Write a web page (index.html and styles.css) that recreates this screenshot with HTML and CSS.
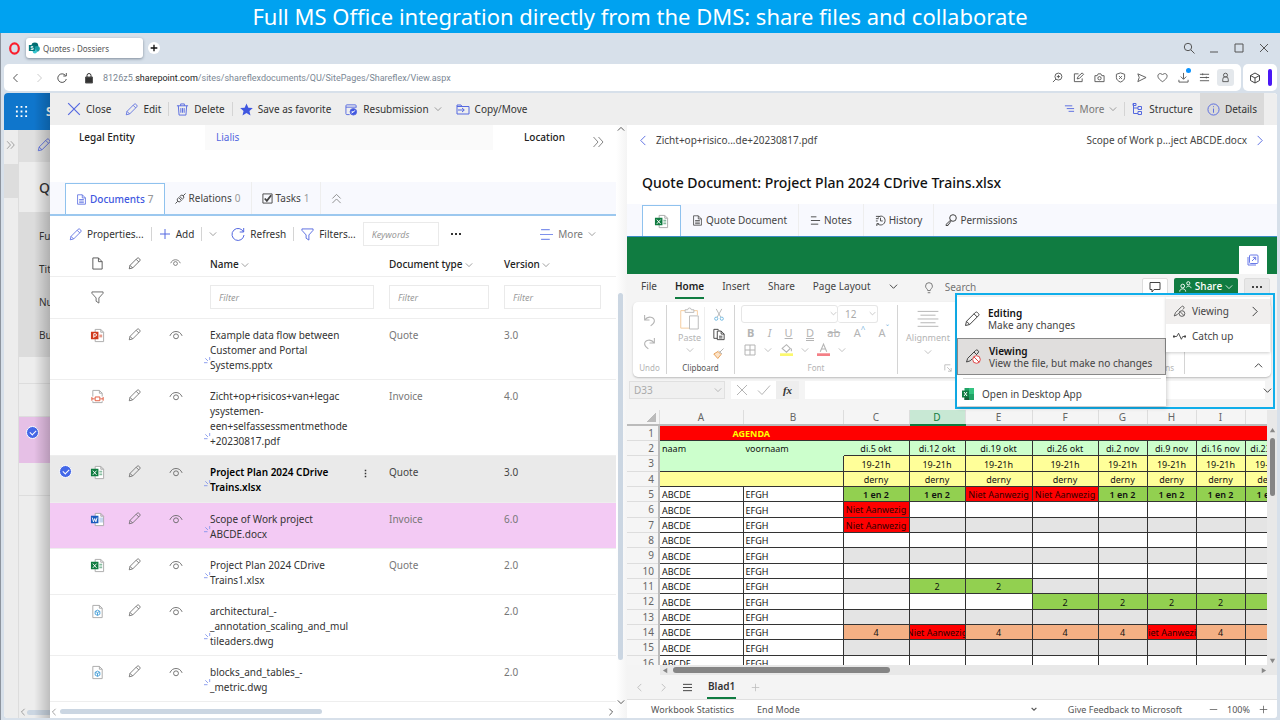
FILE: index.html
```html
<!DOCTYPE html>
<html lang="en">
<head>
<meta charset="utf-8">
<title>Quotes › Dossiers</title>
<link rel="stylesheet" href="styles.css">
</head>
<body>
<svg class="defs" aria-hidden="true">
  <symbol id="pencil" viewBox="0 0 16 16"><path d="M1.500 14.500l1-4.200L11.300 1.500a1.500 1.500 0 0 1 2.100 0l1.100 1.100a1.500 1.500 0 0 1 0 2.100L5.700 13.500zM2.500 10.300l3.200 3.200M10 2.800l3.200 3.200"/></symbol>
  <symbol id="chev" viewBox="0 0 10 10"><path d="M1 3l4 4 4-4"/></symbol>
  <symbol id="eye" viewBox="0 0 16 12"><path d="M1 7C2.500 3.500 5 2 8 2s5.500 1.500 7 5"/><circle cx="8" cy="7.500" r="2.800"/></symbol>
  <symbol id="funnel" viewBox="0 0 14 14"><path d="M1 1h12v1.500L8.500 7.500v5.500L5.500 11V7.500L1 2.500z"/></symbol>
  <symbol id="page" viewBox="0 0 12 14"><path d="M1 1h6l4 4v8H1zM7 1v4h4"/></symbol>
  <symbol id="doc" viewBox="0 0 12 14"><path d="M1 1h6l4 4v8H1zM7 1v4h4M3 7h6M3 9h6M3 11h6"/></symbol>
  <symbol id="xls" viewBox="0 0 16 16"><path class="paper" d="M5.500 1.500h6l3 3v10h-9zM11.500 1.500v3h3"/><path class="tint" d="M10 6h3v2h-3zM10 9h3v2h-3z"/><path class="app" d="M1 4h8v8H1z"/><path class="mark" d="M3 6l4 4.500M7 6l-4 4.500"/></symbol>
  <symbol id="ppt" viewBox="0 0 16 16"><path class="paper" d="M5.500 1.500h6l3 3v10h-9zM11.500 1.500v3h3"/><path class="tint" d="M10 7h3v3h-3z"/><path class="app" d="M1 4h8v8H1z"/><path class="mark" d="M4 10.500V6h1.500a1.300 1.300 0 0 1 0 2.800H4"/></symbol>
  <symbol id="word" viewBox="0 0 16 16"><path class="paper" d="M5.500 1.500h6l3 3v10h-9zM11.500 1.500v3h3"/><path class="tint" d="M10 6h4v1h-4zM10 8h4v1h-4zM10 10h4v1h-4z"/><path class="app" d="M1 4h8v8H1z"/><path class="mark" d="M2.500 6l1.200 4.500L5 7l1.300 3.500L7.500 6"/></symbol>
  <symbol id="pdf" viewBox="0 0 16 16"><path class="paper" d="M3 8V1.500h7l3 3V8M10 1.500v3h3M3 13v1.500h10V13"/><path class="redline" d="M2 8.500v4M14 8.500v4M2 10.500h3M11 10.500h3M5.500 8.500h5v4h-5z"/></symbol>
  <symbol id="dwg" viewBox="0 0 16 16"><path class="paper" d="M3 1.500h7l3 3v10H3zM10 1.500v3h3"/><path class="blueline" d="M8 6.500l2.500 1.300v3L8 12.200l-2.500-1.400v-3zM5.500 7.800L8 9l2.500-1.200M8 9v3"/></symbol>
  <symbol id="spark" viewBox="0 0 8 8"><path d="M0 6.500h4M1.500 1.500l3 3M6.500 0v3.500"/></symbol>
  <symbol id="close" viewBox="0 0 12 12"><path d="M1 1l10 10M11 1L1 11"/></symbol>
  <symbol id="plus" viewBox="0 0 12 12"><path d="M6 1v10M1 6h10"/></symbol>
  <symbol id="dbl" viewBox="0 0 12 12"><path d="M1.500 1L6 6l-4.500 5M6.500 1L11 6l-4.500 5"/></symbol>
</svg>

<header class="banner"><h1>Full MS Office integration directly from the DMS: share files and collaborate</h1></header>

<div class="window">
  <div class="tabstrip">
    <svg class="opera" viewBox="0 0 12 12"><ellipse cx="6" cy="6" rx="4" ry="4.700"/></svg>
    <button class="browser-tab" type="button">
      <svg class="i12" viewBox="0 0 14 14"><circle cx="8" cy="4.500" r="4" fill="#036c70" stroke="none"/><circle cx="10.500" cy="8" r="3.300" fill="#1a9ba1" stroke="none"/><circle cx="8" cy="11" r="2.500" fill="#37c6d0" stroke="none"/><path d="M1 3.500h7v7H1z" fill="#03787c" stroke="none"/><path d="M6 5.200H3.700v1.700H6v1.800H3.200" fill="none" stroke="#fff"/></svg>
      Quotes › Dossiers</button>
    <button class="newtab" type="button" aria-label="New tab"><svg class="i8" viewBox="0 0 12 12"><use href="#plus"/></svg></button>
    <span class="grow"></span>
    <div class="wincontrols">
      <svg viewBox="0 0 12 12"><circle cx="5" cy="5" r="3.700"/><path d="M8 8l3.500 3.500"/></svg>
      <svg viewBox="0 0 12 12"><path d="M2 10h8"/></svg>
      <svg viewBox="0 0 12 12"><path d="M2 2h8v8H2z"/></svg>
      <svg viewBox="0 0 12 12"><path d="M2 2l8 8M10 2l-8 8"/></svg>
    </div>
  </div>

  <div class="addressrow">
    <div class="address">
      <svg class="i12" viewBox="0 0 12 12"><path d="M7.500 2l-4 4 4 4"/></svg>
      <svg class="i12 faint" viewBox="0 0 12 12"><path d="M4.500 2l4 4-4 4"/></svg>
      <svg class="i12 reload" viewBox="0 0 12 12"><path d="M9.500 3.500A4.300 4.300 0 1 0 10.300 7M10.300 1v3H7.300"/></svg>
      <svg class="i12" viewBox="0 0 12 12"><path d="M2.500 5h7v6h-7z" fill="#333"/><path d="M4 5V3.500a2 2 0 0 1 4 0V5" stroke="#333"/></svg>
      <span class="url">8126z5.<b>sharepoint.com</b>/sites/shareflexdocuments/QU/SitePages/Shareflex/View.aspx</span>
      <div class="addricons">
        <svg viewBox="0 0 12 12"><circle cx="7" cy="5" r="3.800"/><path d="M4.300 7.700L1 11M5.200 5h3.600M7 3.200v3.600"/></svg>
        <svg viewBox="0 0 12 12"><path d="M6 2H1.500v8.500H10V7M4.500 7.500l1-2.500L10 1l1.500 1.500L7 7z"/></svg>
        <svg viewBox="0 0 12 12"><path d="M1 4h2.500L4.500 2h3l1 2H11v6.500H1z"/><circle cx="6" cy="6.800" r="1.800"/></svg>
        <svg viewBox="0 0 12 12"><path d="M6 1l4.500 1.500V6c0 2.500-2 4-4.500 5C3.500 10 1.500 8.500 1.500 6V2.500zM4.500 4.500l3 3M7.500 4.500l-3 3"/></svg>
        <svg viewBox="0 0 12 12"><path d="M2 2l9 4-9 4.500L3.500 6z"/></svg>
        <svg viewBox="0 0 12 12"><path d="M6 10.500C2 8 1 6 1 4.300 1 1.500 4.500.8 6 3.200 7.500.8 11 1.500 11 4.300 11 6 10 8 6 10.500z"/></svg>
        <span class="dl"><svg viewBox="0 0 12 12"><path d="M6 1v6.500M3 5l3 3 3-3M1 8.500V11h10V8.500"/></svg></span>
        <svg viewBox="0 0 12 12"><path d="M1 2.500h10M1 6h10M1 9.500h10M4 1.500v2M8 5v2"/></svg>
        <span class="avatar"><svg viewBox="0 0 12 12"><circle cx="6" cy="3.500" r="2.200"/><path d="M3 10.500V8a3 3 0 0 1 6 0v2.500z"/></svg></span>
      </div>
    </div>
    <div class="sidebox">
      <svg class="i12" viewBox="0 0 12 12"><path d="M6 1l4.500 2.500v5L6 11 1.500 8.500v-5zM1.500 3.500L6 6l4.500-2.500M6 6v5"/></svg>
      <span class="purple"></span>
    </div>
  </div>

  <div class="page">
    <aside class="under">
      <div class="suite">
        <svg class="waffle" viewBox="0 0 14 14"><path d="M1 1h2v2H1zM6 1h2v2H6zM11 1h2v2h-2zM1 6h2v2H1zM6 6h2v2H6zM11 6h2v2h-2zM1 11h2v2H1zM6 11h2v2H6zM11 11h2v2h-2z"/></svg>
        <b>S</b>
      </div>
      <div class="under-body">
        <div class="rail"><div class="rail-top"><svg viewBox="0 0 12 12"><use href="#dbl"/></svg></div><div class="rail-sel"></div></div>
        <div class="under-main">
          <div class="u-tool"><svg viewBox="0 0 16 16"><use href="#pencil"/></svg></div>
          <div class="u-title">Q</div>
          <div class="u-form"><span>Fu</span><span>Tit</span><span>Nu</span><span>Bu</span></div>
          <div class="u-gap"></div>
          <div class="u-row"></div>
          <div class="u-pink"><input class="round" type="checkbox" checked aria-label="Dossier selected"></div>
          <div class="u-row"></div>
          <div class="u-rest"><svg class="i8" viewBox="0 0 10 10"><path d="M7 1L3 5l4 4"/></svg><span class="hthumb grow"></span></div>
        </div>
      </div>
    </aside>

    <main class="panel">
      <div class="cmdbar">
        <button type="button"><svg class="i14 blue" viewBox="0 0 12 12"><use href="#close"/></svg>Close</button>
        <button type="button"><svg class="i13 blue" viewBox="0 0 16 16"><use href="#pencil"/></svg>Edit</button>
        <i class="sep"></i>
        <button type="button"><svg class="i13 blue" viewBox="0 0 14 14"><path d="M1 3h12M5 3V1h4v2M2.500 3l.8 10h7.400l.8-10M5.200 5.500v5M7 5.500v5M8.800 5.500v5"/></svg>Delete</button>
        <i class="sep"></i>
        <button type="button"><svg class="i13" viewBox="0 0 14 14"><path d="M7 .5l2 4.500 4.800.4-3.600 3.200 1.100 4.900L7 10.900l-4.300 2.600 1.100-4.900L.2 5.400 5 5z" fill="#4057e0" stroke="none"/></svg>Save as favorite</button>
        <button type="button"><svg class="i13 blue" viewBox="0 0 14 14"><path d="M5 12.500H2a1 1 0 0 1-1-1V3a1 1 0 0 1 1-1h9a1 1 0 0 1 1 1v2M1 4.500h11"/><circle cx="9" cy="9.500" r="3.500" fill="#4057e0"/><path d="M7 11l4-3M7 9.500h2" stroke="#fff"/></svg>Resubmission<svg class="i8 gray" viewBox="0 0 10 10"><use href="#chev"/></svg></button>
        <button type="button"><svg class="i14 blue" viewBox="0 0 14 12"><path d="M1 2h4l1 1.500h7V11H1zM1 3.500h5M2 7h6M6 5l2.300 2L6 9"/></svg>Copy/Move</button>
        <span class="grow"></span>
        <button type="button" class="soft"><svg class="i11 blue" viewBox="0 0 12 12"><path d="M1 2h8M3 5h8M5 8h6"/></svg>More<svg class="i8 gray" viewBox="0 0 10 10"><use href="#chev"/></svg></button>
        <i class="sep"></i>
        <button type="button"><svg class="i12 blue" viewBox="0 0 12 12"><path d="M1.500 0v10.500H6M1.500 5H6M1 .5h3v2H1zM6 3.500h3.500v3H6zM6 8.500h3.500v3H6z"/></svg>Structure</button>
        <button type="button" class="active"><svg class="i13 blue" viewBox="0 0 14 14"><circle cx="7" cy="7" r="6"/><path d="M7 6v4.500M7 3.500v1"/></svg>Details</button>
      </div>

      <div class="split">
        <section class="left">
          <div class="scrollarea">
            <div class="entity">
              <strong class="lbl">Legal Entity</strong><a class="val" href="#">Lialis</a><strong class="loc">Location</strong>
              <svg class="i12 gray dbl" viewBox="0 0 12 12"><use href="#dbl"/></svg>
            </div>
            <nav class="tabs">
              <button type="button" class="tab on"><svg class="i11 blue" viewBox="0 0 12 14"><use href="#doc"/></svg>Documents <small>7</small></button>
              <button type="button" class="tab line"><svg class="i11" viewBox="0 0 12 12"><path d="M.5 11.500l2.500-2.500M11.500.5L9 3M3 9a2.300 2.300 0 0 1 0-3l1-1 3 3-1 1a2.100 2.100 0 0 1-3 0zM9 3a2.100 2.100 0 0 0-3 0l-.8.8 3 3 .8-.8A2.300 2.300 0 0 0 9 3z"/></svg>Relations <small>0</small></button>
              <button type="button" class="tab line"><svg class="i11" viewBox="0 0 12 12"><path d="M1 1h10v10H1z"/><path d="M3 6l2.300 2.500L10 2.500" class="thick"/></svg>Tasks <small>1</small></button>
              <button type="button" class="tab" aria-label="Collapse"><svg class="i11 gray" viewBox="0 0 12 12"><path d="M1.500 6L6 1.500 10.500 6M1.500 11L6 6.500l4.500 4.500"/></svg></button>
            </nav>
            <div class="tools">
              <button type="button"><svg class="i13 blue" viewBox="0 0 16 16"><use href="#pencil"/></svg>Properties...</button>
              <i class="sep"></i>
              <button type="button"><svg class="i12 blue" viewBox="0 0 12 12"><use href="#plus"/></svg>Add</button>
              <i class="sep"></i>
              <button type="button" aria-label="Add options"><svg class="i8 gray" viewBox="0 0 10 10"><use href="#chev"/></svg></button>
              <button type="button"><svg class="i14 blue" viewBox="0 0 14 14"><path d="M12.500 5A6 6 0 1 0 13 8M12.700 1v4H8.700"/></svg>Refresh</button>
              <i class="sep"></i>
              <button type="button"><svg class="i13 blue" viewBox="0 0 14 14"><use href="#funnel"/></svg>Filters...</button>
              <input class="field kw" type="text" placeholder="Keywords" aria-label="Keywords">
              <button type="button" class="dots" aria-label="More actions"><svg viewBox="0 0 12 4"><path d="M1 1h2v2H1zM5 1h2v2H5zM9 1h2v2H9z"/></svg></button>
              <span class="grow"></span>
              <button type="button" class="soft"><svg class="i13 lblue" viewBox="0 0 12 12"><path d="M1 1.500h8M0 6h12M1 10.500h8"/></svg>More<svg class="i8 gray" viewBox="0 0 10 10"><use href="#chev"/></svg></button>
            </div>
            <table class="docs">
              <colgroup><col class="c-check"><col class="c-file"><col class="c-icon"><col class="c-icon"><col class="c-name"><col class="c-type"><col></colgroup>
              <thead>
                <tr><th></th><th><svg class="i13" viewBox="0 0 12 14"><use href="#page"/></svg></th><th><svg class="i13" viewBox="0 0 16 16"><use href="#pencil"/></svg></th><th><svg class="i11" viewBox="0 0 16 12"><use href="#eye"/></svg></th>
                <th class="t name">Name <svg class="i8 gray" viewBox="0 0 10 10"><use href="#chev"/></svg></th><th class="t">Document type <svg class="i8 gray" viewBox="0 0 10 10"><use href="#chev"/></svg></th><th class="t">Version <svg class="i8 gray" viewBox="0 0 10 10"><use href="#chev"/></svg></th></tr>
              </thead>
              <tbody>
                <tr class="filters"><td></td><td><svg class="i13" viewBox="0 0 14 14"><use href="#funnel"/></svg></td><td></td><td></td>
                <td class="name"><input class="field" type="text" placeholder="Filter" aria-label="Filter name"></td><td><input class="field" type="text" placeholder="Filter" aria-label="Filter document type"></td><td><input class="field" type="text" placeholder="Filter" aria-label="Filter version"></td></tr>
                <tr><td></td><td><svg class="file red" viewBox="0 0 16 16"><use href="#ppt"/></svg></td><td><svg class="i13" viewBox="0 0 16 16"><use href="#pencil"/></svg></td><td><svg class="i14" viewBox="0 0 16 12"><use href="#eye"/></svg></td>
                <td class="name">Example data flow between<br>Customer and Portal<br>Systems.pptx<svg class="spark" viewBox="0 0 8 8"><use href="#spark"/></svg></td><td>Quote</td><td>3.0</td></tr>
                <tr><td></td><td><svg class="file" viewBox="0 0 16 16"><use href="#pdf"/></svg></td><td><svg class="i13" viewBox="0 0 16 16"><use href="#pencil"/></svg></td><td><svg class="i14" viewBox="0 0 16 12"><use href="#eye"/></svg></td>
                <td class="name">Zicht+op+risicos+van+legac<br>ysystemen-<br>een+selfassessmentmethode<br>+20230817.pdf<svg class="spark" viewBox="0 0 8 8"><use href="#spark"/></svg></td><td>Invoice</td><td>4.0</td></tr>
                <tr class="sel"><td><input class="round" type="checkbox" checked aria-label="Select document"></td><td><svg class="file green" viewBox="0 0 16 16"><use href="#xls"/></svg></td><td><svg class="i13" viewBox="0 0 16 16"><use href="#pencil"/></svg></td><td><svg class="i14" viewBox="0 0 16 12"><use href="#eye"/></svg></td>
                <td class="name">Project Plan 2024 CDrive<br>Trains.xlsx<svg class="spark" viewBox="0 0 8 8"><use href="#spark"/></svg><button type="button" class="kebab" aria-label="Document menu"><svg viewBox="0 0 4 12"><path d="M1 1h2v2H1zM1 5h2v2H1zM1 9h2v2H1z"/></svg></button></td><td>Quote</td><td>3.0</td></tr>
                <tr class="pink"><td></td><td><svg class="file navy" viewBox="0 0 16 16"><use href="#word"/></svg></td><td><svg class="i13" viewBox="0 0 16 16"><use href="#pencil"/></svg></td><td><svg class="i14" viewBox="0 0 16 12"><use href="#eye"/></svg></td>
                <td class="name">Scope of Work project<br>ABCDE.docx<svg class="spark" viewBox="0 0 8 8"><use href="#spark"/></svg></td><td>Invoice</td><td>6.0</td></tr>
                <tr><td></td><td><svg class="file green" viewBox="0 0 16 16"><use href="#xls"/></svg></td><td><svg class="i13" viewBox="0 0 16 16"><use href="#pencil"/></svg></td><td><svg class="i14" viewBox="0 0 16 12"><use href="#eye"/></svg></td>
                <td class="name">Project Plan 2024 CDrive<br>Trains1.xlsx<svg class="spark" viewBox="0 0 8 8"><use href="#spark"/></svg></td><td>Quote</td><td>2.0</td></tr>
                <tr><td></td><td><svg class="file" viewBox="0 0 16 16"><use href="#dwg"/></svg></td><td><svg class="i13" viewBox="0 0 16 16"><use href="#pencil"/></svg></td><td><svg class="i14" viewBox="0 0 16 12"><use href="#eye"/></svg></td>
                <td class="name">architectural_-<br>_annotation_scaling_and_mul<br>tileaders.dwg<svg class="spark" viewBox="0 0 8 8"><use href="#spark"/></svg></td><td></td><td>2.0</td></tr>
                <tr><td></td><td><svg class="file" viewBox="0 0 16 16"><use href="#dwg"/></svg></td><td><svg class="i13" viewBox="0 0 16 16"><use href="#pencil"/></svg></td><td><svg class="i14" viewBox="0 0 16 12"><use href="#eye"/></svg></td>
                <td class="name">blocks_and_tables_-<br>_metric.dwg<svg class="spark" viewBox="0 0 8 8"><use href="#spark"/></svg></td><td></td><td>2.0</td></tr>
              </tbody>
            </table>
            <div class="hscroll"><svg class="i8 gray" viewBox="0 0 10 10"><path d="M7 1L3 5l4 4"/></svg><span class="hthumb half"></span><span class="grow"></span><svg class="i8 dark" viewBox="0 0 10 10"><path d="M3 1l4 4-4 4"/></svg></div>
          </div>
          <div class="vscroll"><svg class="i8 dark" viewBox="0 0 10 10"><path d="M1 7l4-4 4 4"/></svg><span class="vthumb"></span><svg class="i8 dark" viewBox="0 0 10 10"><use href="#chev"/></svg></div>
        </section>

        <section class="right">
          <div class="pager">
            <a href="#"><svg class="i11 blue" viewBox="0 0 10 12"><path d="M7 1L2 6l5 5"/></svg>Zicht+op+risico...de+20230817.pdf</a>
            <a href="#">Scope of Work p...ject ABCDE.docx<svg class="i11 blue" viewBox="0 0 10 12"><path d="M3 1l5 5-5 5"/></svg></a>
          </div>
          <h2>Quote Document: Project Plan 2024 CDrive Trains.xlsx</h2>
          <nav class="tabs rtabs">
            <button type="button" class="tab on" aria-label="Workbook"><svg class="file green" viewBox="0 0 16 16"><use href="#xls"/></svg></button>
            <button type="button" class="tab line"><svg class="i11" viewBox="0 0 12 14"><use href="#doc"/></svg>Quote Document</button>
            <button type="button" class="tab line"><svg class="i11" viewBox="0 0 12 12"><path d="M1 2h6M1 6h10M1 10h8"/></svg>Notes</button>
            <button type="button" class="tab line"><svg class="i11" viewBox="0 0 12 12"><path d="M1 1.500h4M1 4h3M1 6.500h2M6 3v3.500h2.500M3 3C6-.5 11 1.500 11 6s-5 6.500-8.500 3.500M2 12V9.500h2.500"/></svg>History</button>
            <button type="button" class="tab"><svg class="i12" viewBox="0 0 12 12"><circle cx="8" cy="4" r="3.300"/><path d="M5.500 6.200L1 10.500V11.500h2l.5-1.500 1-.3.500-1.500 1.500-1.300"/></svg>Permissions</button>
          </nav>
          <div class="office">
            <div class="greenbar"><button type="button" class="popout" aria-label="Open in new window"><svg class="i12" viewBox="0 0 12 12"><rect x="2.500" y="1" width="8.500" height="8.500" rx="1"/><path d="M1 3v8h8M5 7l3.500-3.500M5.800 3.300h2.900v2.900"/></svg></button></div>
            <div class="menubar">
              <button type="button">File</button><button type="button" class="cur">Home</button><button type="button">Insert</button><button type="button">Share</button><button type="button">Page Layout</button>
              <svg class="i9 dark" viewBox="0 0 10 10"><use href="#chev"/></svg>
              <label class="search"><svg class="i12" viewBox="0 0 12 14"><path d="M4.500 10C4.500 8 2 7.500 2 4.800a4 4 0 0 1 8 0C10 7.500 7.500 8 7.500 10zM4.500 12.500h3"/></svg><input type="text" placeholder="Search"></label>
              <button type="button" class="comment" aria-label="Comments"><svg class="i12" viewBox="0 0 12 12"><path d="M1 1.500h10v7H5L3 11V8.500H1z"/></svg></button>
              <button type="button" class="share"><svg class="i13" viewBox="0 0 14 12"><circle cx="4" cy="5.500" r="2"/><path d="M.8 11.500c0-4 6.400-4 6.400 0"/><circle cx="10" cy="2.500" r="1.700"/><path d="M8 7c.8-2 4.500-2 5 .8"/></svg>Share<svg class="i8" viewBox="0 0 10 10"><use href="#chev"/></svg></button>
              <button type="button" class="ell dots" aria-label="More options"><svg viewBox="0 0 12 4"><path d="M1 1h2v2H1zM5 1h2v2H5zM9 1h2v2H9z"/></svg></button>
            </div>
            <div class="ribbon">
              <div class="grp undo"><svg class="i13" viewBox="0 0 12 12"><path d="M1.500 1v4.500H6M1.500 5.500C5 1 10.500 3 10.500 6.500c0 2-1.500 3-3.500 4.500"/></svg><svg class="i13" viewBox="0 0 12 12"><path d="M10.500 1v4.500H6M10.500 5.500C7 1 1.500 3 1.500 6.500c0 2 1.500 3 3.500 4.500"/></svg><small>Undo</small></div>
              <div class="grp clip">
                <div class="paste"><svg viewBox="0 0 24 26"><path d="M7 4H2v20h10M16 4h5v5" stroke="#f3c795"/><path d="M7 5V3h3a2 2 0 0 1 4 0h3v3H7zM12 10h10v15H12z" fill="#fff"/></svg><span>Paste</span><svg class="i8" viewBox="0 0 10 10"><use href="#chev"/></svg></div>
                <div class="clipicons">
                  <svg viewBox="0 0 12 14"><path d="M3 1l5 9M9 1L4 10"/><g stroke="#6fb8e0"><circle cx="3" cy="11.500" r="1.700"/><circle cx="9" cy="11.500" r="1.700"/></g></svg>
                  <svg viewBox="0 0 14 14" class="dark"><path d="M5 11.500H1V1h5l1 1.500M5 3h4.500L13 6.500V13H5zM9.500 3v3.500H13M7 9h4M7 11h4"/></svg>
                  <svg viewBox="0 0 12 12"><path d="M7 4.500l3.500-3.500M5.500 3.500l3.500 3"/><path d="M5 4L.8 6.500l4 4.500L8 7z" stroke="#e8a15c" fill="#fbe3c8"/></svg>
                </div>
                <small class="strong">Clipboard</small>
              </div>
              <div class="grp font">
                <div class="selects"><div class="pick"><select aria-label="Font"><option></option></select><svg class="i8" viewBox="0 0 10 10"><use href="#chev"/></svg></div><div class="pick size"><select aria-label="Font size"><option>12</option></select><svg class="i8" viewBox="0 0 10 10"><use href="#chev"/></svg></div></div>
                <div class="fmt"><b>B</b><i>I</i><u>U</u><u class="dbl-u">D</u><s>ab</s><span>A<sup>^</sup></span><span>A<sup>ˇ</sup></span></div>
                <div class="fmt fills">
                  <svg class="i12" viewBox="0 0 12 12"><path d="M1 1h10v10H1zM6 1v10M1 6h10"/></svg><svg class="i8" viewBox="0 0 10 10"><use href="#chev"/></svg>
                  <svg class="i13" viewBox="0 0 12 12"><path d="M2 5l4-3.500L9.500 5 6 8.500zM10.500 5v2.500"/><path d="M0 9.500h12v2.500H0z" fill="#fbf86e" stroke="none"/></svg><svg class="i8" viewBox="0 0 10 10"><use href="#chev"/></svg>
                  <svg class="i13" viewBox="0 0 12 12"><path d="M3 8l3-7 3 7M4 5.500h4"/><path d="M0 9.500h12v2.500H0z" fill="#f47f86" stroke="none"/></svg><svg class="i8" viewBox="0 0 10 10"><use href="#chev"/></svg>
                </div>
                <small>Font</small>
              </div>
              <div class="grp align"><svg viewBox="0 0 22 18"><path d="M0 1.500h22M3 5.500h16M0 9.500h22M3 13.500h16M0 17.300h22"/></svg><span>Alignment</span><svg class="i8" viewBox="0 0 10 10"><use href="#chev"/></svg><small class="launch"><svg class="i8" viewBox="0 0 10 10"><path d="M8 1H1v7M4 4l5 5M9 5v4H5"/></svg></small></div>
              <div class="grp grow options"><small>ns</small></div>
              <div class="grp collapse"><svg class="i9 dark" viewBox="0 0 10 10"><path d="M1 7l4-4 4 4"/></svg></div>
            </div>
            <div class="formula">
              <div class="namebox"><input type="text" value="D33" aria-label="Name box"><svg class="i8" viewBox="0 0 10 10"><use href="#chev"/></svg></div>
              <div class="fxbtns"><svg class="i12" viewBox="0 0 12 12"><use href="#close"/></svg><svg class="i12" viewBox="0 0 12 12"><path d="M0 6.500l4 4L12 1.500"/></svg><em>fx</em></div>
              <input class="fx" type="text" aria-label="Formula"><svg class="i9 dark" viewBox="0 0 10 10"><use href="#chev"/></svg>
            </div>
            <div class="sheetwrap">
              <div class="sheet">
                <table class="cells">
                  <colgroup><col class="w-h"><col class="w-a"><col class="w-b"><col class="w-c"><col class="w-d"><col class="w-e"><col class="w-c"><col class="w-g"><col class="w-g"><col class="w-g"><col class="w-g"></colgroup>
                  <thead><tr><th class="corner"></th><th>A</th><th>B</th><th>C</th><th class="hot">D</th><th>E</th><th>F</th><th>G</th><th>H</th><th>I</th><th></th></tr></thead>
                  <tbody>
                    <tr class="r1"><th>1</th><td colspan="2">AGENDA</td><td colspan="8"></td></tr>
                    <tr class="mint"><th>2</th><td class="l open">naam</td><td class="l open">voornaam</td><td>di.5 okt</td><td>di.12 okt</td><td>di.19 okt</td><td>di.26 okt</td><td>di.2 nov</td><td>di.9 nov</td><td>di.16 nov</td><td>di.23 nov</td></tr>
                    <tr class="yellow"><th>3</th><td class="mintc" colspan="2"></td><td>19-21h</td><td>19-21h</td><td>19-21h</td><td>19-21h</td><td>19-21h</td><td>19-21h</td><td>19-21h</td><td>19-21h</td></tr>
                    <tr class="yellow"><th>4</th><td colspan="2"></td><td>derny</td><td>derny</td><td>derny</td><td>derny</td><td>derny</td><td>derny</td><td>derny</td><td>derny</td></tr>
                    <tr class="data bold"><th>5</th><td class="l">ABCDE</td><td class="l">EFGH</td><td class="g">1 en 2</td><td class="g">1 en 2</td><td class="r">Niet Aanwezig</td><td class="r">Niet Aanwezig</td><td class="g">1 en 2</td><td class="g">1 en 2</td><td class="g">1 en 2</td><td class="g">1 en 2</td></tr>
                    <tr class="data"><th>6</th><td class="l">ABCDE</td><td class="l">EFGH</td><td class="r">Niet Aanwezig</td><td></td><td></td><td></td><td></td><td></td><td></td><td></td></tr>
                    <tr class="data alt"><th>7</th><td class="l">ABCDE</td><td class="l">EFGH</td><td class="r">Niet Aanwezig</td><td></td><td></td><td></td><td></td><td></td><td></td><td></td></tr>
                    <tr class="data"><th>8</th><td class="l">ABCDE</td><td class="l">EFGH</td><td></td><td></td><td></td><td></td><td></td><td></td><td></td><td></td></tr>
                    <tr class="data alt"><th>9</th><td class="l">ABCDE</td><td class="l">EFGH</td><td></td><td></td><td></td><td></td><td></td><td></td><td></td><td></td></tr>
                    <tr class="data"><th>10</th><td class="l">ABCDE</td><td class="l">EFGH</td><td></td><td></td><td></td><td></td><td></td><td></td><td></td><td></td></tr>
                    <tr class="data alt"><th>11</th><td class="l">ABCDE</td><td class="l">EFGH</td><td></td><td class="g">2</td><td class="g">2</td><td></td><td></td><td></td><td></td><td></td></tr>
                    <tr class="data"><th>12</th><td class="l">ABCDE</td><td class="l">EFGH</td><td></td><td></td><td></td><td class="g">2</td><td class="g">2</td><td class="g">2</td><td class="g">2</td><td class="g"></td></tr>
                    <tr class="data alt"><th>13</th><td class="l">ABCDE</td><td class="l">EFGH</td><td></td><td></td><td></td><td></td><td></td><td></td><td></td><td></td></tr>
                    <tr class="data"><th>14</th><td class="l">ABCDE</td><td class="l">EFGH</td><td class="o">4</td><td class="r"><span>Niet Aanwezig</span></td><td class="o">4</td><td class="o">4</td><td class="o">4</td><td class="r"><span>Niet Aanwezig</span></td><td class="o">4</td><td class="o"></td></tr>
                    <tr class="data alt"><th>15</th><td class="l">ABCDE</td><td class="l">EFGH</td><td></td><td></td><td></td><td></td><td></td><td></td><td></td><td></td></tr>
                    <tr class="data"><th>16</th><td class="l">ABCDE</td><td class="l">EFGH</td><td></td><td></td><td></td><td></td><td></td><td></td><td></td><td></td></tr>
                  </tbody>
                </table>
              </div>
              <div class="sheet-v"><svg viewBox="0 0 8 8"><path d="M1 6h6L4 1z"/></svg><span></span><svg viewBox="0 0 8 8"><path d="M1 2h6L4 7z"/></svg></div>
            </div>
            <div class="sheet-h"><svg viewBox="0 0 8 8"><path d="M6 1v6L1 4z"/></svg><span></span><i class="grow"></i><svg viewBox="0 0 8 8"><path d="M2 1v6l5-3z"/></svg></div>
            <div class="sheettabs">
              <svg class="i9" viewBox="0 0 10 10"><path d="M7 1L3 5l4 4"/></svg><svg class="i9" viewBox="0 0 10 10"><path d="M3 1l4 4-4 4"/></svg>
              <svg class="i9 dark" viewBox="0 0 10 10"><path d="M0 1.500h10M0 5h10M0 8.500h10"/></svg>
              <button type="button">Blad1</button><svg class="i9" viewBox="0 0 12 12"><use href="#plus"/></svg>
            </div>
            <div class="status"><span>Workbook Statistics</span><span>End Mode</span><span class="grow"></span><svg class="i6" viewBox="0 0 10 10"><path d="M1 3l4 4 4-4" class="thick"/></svg><span class="fb">Give Feedback to Microsoft</span><svg class="i9" viewBox="0 0 12 12"><path d="M1 6h10"/></svg><span>100%</span><svg class="i9" viewBox="0 0 12 12"><use href="#plus"/></svg></div>

            <div class="callout">
              <div class="submenu">
                <button type="button"><svg class="i16" viewBox="0 0 16 16"><use href="#pencil"/></svg><span><b>Editing</b>Make any changes</span></button>
                <button type="button" class="cur"><svg class="i16" viewBox="0 0 16 16"><path d="M7.500 9.500l-2.300 2.300L1.500 13l1.200-3.700L10.500 1.500a1.400 1.400 0 0 1 2.500 2.500L11 6M9 3l2.500 2.500"/><g stroke="#e04848" fill="#fff"><circle cx="11.500" cy="10.500" r="3.800"/><path d="M9 8l5 5"/></g></svg><span><b>Viewing</b>View the file, but make no changes</span></button>
                <hr>
                <button type="button" class="open"><svg class="i12" viewBox="0 0 12 12"><g stroke="none"><path d="M2.500 0h9.500v12H2.500z" fill="#21a366"/><path d="M7 0h5v6H7z" fill="#33c481"/><path d="M2.500 6H7v6H2.500z" fill="#185c37"/><path d="M0 2.500h7v7H0z" fill="#107c41"/></g><path d="M2 4l3 4M5 4L2 8" stroke="#fff"/></svg>Open in Desktop App</button>
              </div>
              <div class="rootmenu">
                <button type="button" class="cur"><svg class="i13" viewBox="0 0 16 16"><path d="M7 10l-2 2-3.500 1.500L3 9.500 10.500 2a1.400 1.400 0 0 1 2.500 2.500L12 5.500"/><circle cx="11" cy="10.500" r="3.500"/><path d="M8.500 8l5 5"/></svg>Viewing<span class="grow"></span><svg class="i11 dark" viewBox="0 0 10 12"><path d="M3 1l5 5-5 5"/></svg></button>
                <button type="button"><svg class="i13" viewBox="0 0 14 12"><path d="M1 6h3l2-3.500L9 9l1.500-3H13"/><path class="thick" d="M1 5v2M13 5v2"/></svg>Catch up</button>
              </div>
            </div>
          </div>
        </section>
      </div>
    </main>
  </div>
</div>
</body>
</html>
```
FILE: styles.css
```css
* { box-sizing: border-box; }
body { margin: 0; height: 100vh; display: flex; flex-direction: column; overflow: hidden; font: 11px/15px "Noto Sans", "Open Sans", sans-serif; color: #333; background: #d7e0ea; }
button, input, select { font: inherit; color: inherit; margin: 0; }
button { background: none; border: 0; padding: 0; display: flex; align-items: center; white-space: nowrap; }
a { color: inherit; text-decoration: none; }
svg { display: block; flex: none; fill: none; stroke: currentColor; stroke-width: 1; overflow: visible; }
.defs { width: 0; height: 0; position: absolute; }
.grow { flex: 1; }
.i6 { width: 6px; height: 6px; } .i8 { width: 8px; height: 8px; } .i9 { width: 9px; height: 9px; }
.i11 { width: 11px; height: 11px; } .i12 { width: 12px; height: 12px; } .i13 { width: 13px; height: 13px; }
.i14 { width: 14px; height: 14px; } .i16 { width: 16px; height: 16px; }
.blue { color: #5468e0; } .lblue { color: #7f92ec; } .gray { color: #888; } .dark { color: #333; }
.thick { stroke-width: 2; }
.dots svg { width: 12px; height: 4px; fill: currentColor; stroke: none; }

.banner { height: 33px; flex: none; background: #00a2f0; color: #fff; display: flex; align-items: center; justify-content: center; }
.banner h1 { margin: 0; padding-bottom: 2px; font: 400 22px/30px "Noto Sans", sans-serif; }

.window { flex: 1; min-height: 0; display: flex; flex-direction: column; padding: 0 3px 2px; border-left: 1px solid #8d949e; background: #d7e0ea; }
.tabstrip { height: 30px; flex: none; display: flex; align-items: center; padding: 0 7px 0 4px; gap: 5px; }
.opera { width: 13px; height: 13px; color: #fa1e2d; }
.opera ellipse { stroke-width: 2; }
.browser-tab { width: 117px; height: 20px; padding: 0 2px; gap: 3px; border-radius: 3px; background: #fff; font-size: 8px; color: #555; box-shadow: 0 1px 3px #7f8c9a; }
.newtab { width: 12px; height: 12px; justify-content: center; border-radius: 50%; background: #fff; color: #111; }
.newtab svg { stroke-width: 2; }
.wincontrols { display: flex; gap: 13px; color: #555; }
.wincontrols svg { width: 12px; height: 12px; }
.addressrow { flex: none; display: flex; gap: 2px; height: 27px; margin-top: 1px; }
.address, .sidebox { display: flex; align-items: center; background: #fff; border-radius: 5px; }
.address { flex: 1; padding: 0 9px 0 6px; color: #555; }
.address > svg { margin-right: 11px; }
.address > .reload { margin-right: 15px; }
.address .faint { color: #ccc; }
.url { flex: 1; font: 9px/12px Roboto, "Noto Sans", sans-serif; color: #7b8794; margin-left: -3px; }
.url b { font-weight: 400; color: #222; }
.addricons { display: flex; align-items: center; gap: 10px; }
.addricons svg { width: 11px; height: 11px; }
.dl { position: relative; }
.dl::after { content: ""; position: absolute; right: -2px; top: -4px; width: 5px; height: 5px; border-radius: 50%; background: #0a94ff; }
.avatar { background: #e4e8ec; border-radius: 3px; padding: 3px; margin: 0 -2px 0 -3px; }
.sidebox { width: 34px; padding: 0 5px 0 6px; justify-content: space-between; color: #444; }
.purple { width: 4px; height: 17px; border-radius: 2px; background: #4a17f5; }

.page { flex: 1; min-height: 0; display: flex; margin-top: 2px; background: #fff; border-radius: 4px; overflow: hidden; }
.under { width: 46px; flex: none; display: flex; flex-direction: column; overflow: hidden; position: relative; background: #ededed; }
.under::after { content: ""; position: absolute; right: 0; top: 0; bottom: 0; width: 16px; background: linear-gradient(to right, transparent, #0003); }
.suite { height: 37px; flex: none; display: flex; align-items: center; gap: 18px; padding-left: 11px; background: #0f76cc; color: #fff; font-size: 12px; }
.waffle { width: 13px; height: 13px; fill: #fff; stroke: none; }
.under-body { flex: 1; display: flex; min-height: 0; }
.rail { width: 15px; flex: none; border-right: 1px solid #ddd; }
.rail-top { height: 34px; padding: 10px 2px; color: #888; }
.rail-top svg { width: 9px; height: 10px; }
.rail-sel { height: 34px; background: #ddd; }
.under-main { flex: 1; display: flex; flex-direction: column; }
.u-tool { height: 32px; padding: 8px 0 0 18px; background: #dfdfdf; color: #5468e0; }
.u-tool svg { width: 14px; height: 14px; }
.u-title { height: 50px; padding: 16px 0 0 20px; font-size: 14px; line-height: 20px; font-weight: 500; }
.u-form { height: 145px; padding: 17px 0 0 20px; background: #dcdcdc; display: flex; flex-direction: column; gap: 18px; white-space: nowrap; font-size: 10px; }
.u-gap { height: 27px; border-bottom: 1px solid #ddd; }
.u-row { height: 33px; border-bottom: 1px solid #ddd; }
.u-pink { height: 46px; padding: 9px 0 0 7px; background: #e6c0e6; }
.u-rest { flex: 1; display: flex; align-items: flex-end; color: #888; padding-bottom: 2px; }
.u-rest .hthumb { margin-bottom: 1px; }
.hthumb { height: 5px; border-radius: 3px; background: #cbd6e2; }
.round { appearance: none; display: block; position: relative; width: 13px; height: 13px; border-radius: 50%; background: #4468e8; border: 1px solid #fff; }
.round::after { content: ""; position: absolute; left: 3px; top: 3px; width: 5px; height: 3px; border: solid #fff; border-width: 0 0 1px 1px; transform: rotate(-45deg); }

.panel { flex: 1; min-width: 0; display: flex; flex-direction: column; background: #fff; }
.cmdbar { height: 32px; flex: none; display: flex; align-items: center; background: #eee; padding: 0 13px 0 10px; font-size: 10px; }
.cmdbar button { height: 100%; padding: 0 7px; gap: 5px; }
.sep { width: 1px; height: 14px; background: #d4d4d4; }
.soft { color: #777; }
.cmdbar .active { background: #dadada; }
.split { flex: 1; min-height: 0; display: grid; grid-template-columns: 577fr 650fr; }
.left { display: flex; min-width: 0; min-height: 0; }
.scrollarea { flex: 1; min-width: 0; display: flex; flex-direction: column; }
.vscroll { width: 11px; flex: none; display: flex; flex-direction: column; align-items: center; padding: 0 2px 12px 0; background: linear-gradient(to right, #fff, #f4f4f4); }
.vthumb { width: 5px; flex: 367; border-radius: 3px; background: #cbd6e2; margin: 160px 0 38px; }
.entity { height: 57px; flex: none; display: flex; align-items: flex-start; font-size: 10px; line-height: 25px; color: #222; }
.entity strong { font-weight: 500; }
.lbl { width: 155px; padding-left: 29px; }
.val { flex: 1; padding-left: 11px; background: #fafafa; color: #5468e0; }
.loc { width: 99px; padding-left: 31px; }
.dbl { margin: 11px 12px 0 0; }
.tabs { height: 34px; flex: none; display: flex; padding-left: 15px; background: #f8f9fe; border-bottom: 2px solid #9cc8ef; font-size: 10px; }
.tab { padding: 0 10px; gap: 3px; color: #444; }
.tab small { font-size: 10px; color: #999; }
.tab.line { border-right: 1px solid #eee; }
.tab.on { background: #fff; border: 1px solid #8fc2ee; border-bottom: 0; color: #4057e0; font-weight: 500; margin-top: 1px; }
.tools { height: 36px; flex: none; display: flex; align-items: center; padding: 0 13px 0 12px; font-size: 10px; }
.tools button { padding: 0 7px; gap: 5px; }
.tools .dots { padding-left: 11px; }
.field { width: 100%; height: 24px; padding: 0 8px; border: 1px solid #eaeaea; background: #fff; border-radius: 0; font-size: 9px; }
.field::placeholder { font-style: italic; color: #999; opacity: 1; }
.tools .kw { width: 76px; }
.docs { width: 100%; table-layout: fixed; border-collapse: collapse; }
.docs tr { border-bottom: 1px solid #eee; }
.docs th, .docs td { padding: 9px 0 6px; vertical-align: top; text-align: left; font-size: 10px; line-height: 15px; color: #777; font-weight: 400; }
.docs td svg, .docs th svg { margin: 0 auto; }
.docs thead th { padding: 5px 0 4px; color: #555; }
.docs thead th.t { font-weight: 500; color: #222; }
.docs th.t svg { display: inline-block; margin: 0; vertical-align: middle; }
.docs td svg { color: #666; }
.docs .name { position: relative; padding-left: 14px; color: #333; white-space: nowrap; }
.docs .filters td { padding: 8px 15px 9px 0; vertical-align: middle; }
.docs .filters td:nth-child(2) { padding-right: 0; }
.docs .filters .name { padding-left: 14px; }
.docs tr .round { margin: 0 auto; }
.docs .sel { background: #eaeaea; }
.docs .sel td { color: #444; padding-bottom: 7px; }
.docs .sel .name { font-weight: 600; color: #000; }
.docs .pink { background: #f3caf4; }
.c-check { width: 30px; } .c-file { width: 34px; } .c-icon { width: 41px; } .c-name { width: 193px; } .c-type { width: 115px; }
.docs .spark { position: absolute; left: 8px; bottom: 15px; width: 7px; height: 7px; color: #7f92ec; }
.docs .kebab { position: absolute; right: 22px; top: 13px; }
.kebab svg { width: 3px; height: 9px; fill: #333; stroke: none; }
.file { width: 15px; height: 15px; }
.paper { stroke: #aaa; fill: #fff; } .app { fill: currentColor; stroke: none; } .mark { stroke: #fff; }
.tint { fill: currentColor; stroke: none; opacity: .5; }
.docs .green, .green { color: #107c41; } .docs .red { color: #d03a1c; } .docs .navy { color: #185abd; }
.redline { stroke: #e0573c; } .blueline { stroke: #4aa0d8; }
.hscroll { flex: 1; display: flex; align-items: center; padding: 3px 1px 0 0; gap: 2px; }
.half { width: 262px; }

.right { display: flex; flex-direction: column; min-width: 0; min-height: 0; }
.pager { height: 31px; flex: none; display: flex; justify-content: space-between; padding: 0 12px 0 11px; font-size: 10px; color: #444; }
.pager a { display: flex; align-items: center; gap: 7px; }
.right h2 { margin: 0; padding: 17px 15px 11px; font-size: 14px; line-height: 20px; font-weight: 500; color: #111; }
.right .rtabs { height: 33px; border-bottom: 1px solid #3a8cc4; }
.rtabs .tab { padding: 0 11px; }
.office { flex: 1; min-height: 0; display: flex; flex-direction: column; position: relative; background: #f4f4f4; }
.greenbar { height: 37px; flex: none; background: #107c41; display: flex; justify-content: flex-end; align-items: flex-end; padding-right: 10px; }
.popout { width: 28px; height: 28px; background: #fff; justify-content: center; color: #6a7be8; }
.menubar { height: 28px; flex: none; display: flex; align-items: center; gap: 18px; padding: 0 7px 3px 14px; font-size: 10px; color: #444; }
.menubar .cur { font-weight: 600; box-shadow: 0 3px #f4f4f4, 0 5px #107c41; color: #222; }
.search { flex: 1; display: flex; align-items: center; gap: 10px; margin-left: 7px; padding-top: 2px; color: #666; }
.search input { width: 100px; border: 0; padding: 0; background: none; }
.menubar .comment, .menubar .ell { width: 26px; height: 17px; justify-content: center; background: #fff; border: 1px solid #ddd; border-radius: 2px; }
.menubar .ell { background: #e8e8e8; margin-left: -12px; }
.menubar .share { width: 64px; height: 17px; justify-content: center; gap: 3px; background: #107c41; color: #fff; border-radius: 2px; margin-left: -12px; font-weight: 500; }
.ribbon { height: 75px; flex: none; display: flex; margin: 0 6px; padding: 3px 0; background: #fff; border-radius: 5px; box-shadow: 0 1px 2px #bbb; color: #b4b4b4; }
.grp { position: relative; display: flex; border-right: 1px solid #d4d4d4; padding: 2px 0 14px; }
.grp small { position: absolute; left: 0; right: 0; bottom: -1px; text-align: center; font-size: 8px; line-height: 14px; }
.grp .strong { color: #555; }
.undo { width: 34px; flex-direction: column; align-items: center; gap: 10px; padding-top: 9px; }
.clip { width: 68px; padding-left: 11px; gap: 8px; }
.paste { display: flex; flex-direction: column; align-items: center; border-right: 1px solid #eee; padding-right: 3px; font-size: 9px; line-height: 12px; gap: 2px; }
.paste > svg:first-child { width: 21px; height: 23px; }
.clipicons { display: flex; flex-direction: column; justify-content: space-between; padding-top: 1px; }
.clipicons svg { width: 12px; height: 13px; }
.font { width: 163px; flex-direction: column; gap: 3px; padding: 0 5px 14px 6px; }
.selects { display: flex; }
.pick { position: relative; width: 97px; }
.pick svg { position: absolute; right: 1px; top: 5px; width: 7px; height: 7px; }
.pick.size { width: 40px; }
.pick.size svg { right: 2px; }
select { appearance: none; width: 100%; height: 18px; padding: 0 7px; border: 1px solid #e6e6e6; border-radius: 3px; font-size: 10px; color: #aaa; background: #fff; }
.size select { border-left: 0; }
.fmt { display: flex; align-items: center; justify-content: space-between; font-size: 11px; line-height: 14px; padding: 0 3px 0 6px; }
.fmt sup { font-size: 8px; line-height: 4px; color: #7ab6e0; }
.dbl-u { text-decoration-style: double; }
.fills { justify-content: flex-start; gap: 8px; padding-left: 3px; }
.align { width: 60px; flex-direction: column; align-items: center; border: 0; font-size: 9px; padding-top: 5px; gap: 3px; }
.align > svg:first-child { width: 22px; height: 17px; }
.align .launch { left: auto; right: 6px; bottom: 2px; }
.options small { left: auto; right: 10px; }
.collapse { width: 86px; border: 0; justify-content: flex-end; align-items: flex-end; padding: 0 8px 4px; }
.formula { height: 25px; flex: none; display: flex; align-items: center; padding: 4px 5px 3px 2px; gap: 6px; }
.formula > * { height: 18px; background: #fff; }
.formula > svg { height: 9px; background: none; margin-left: -12px; }
.namebox { width: 96px; display: flex; align-items: center; padding: 0 4px; background: #f0f0f0; border: 1px solid #e0e0e0; color: #aaa; }
.namebox input { width: 80px; border: 0; padding: 0; background: none; font-size: 10px; }
.fxbtns { display: flex; align-items: center; gap: 10px; padding-left: 5px; color: #b4b4b4; }
.fxbtns em { font: italic 700 11px/18px "Liberation Serif", serif; color: #333; background: #eee; width: 23px; text-align: center; margin-left: -4px; }
.fx { flex: 1; min-width: 0; border: 0; padding: 0 4px; margin-right: 4px; }
.sheetwrap { flex: 1; min-height: 0; display: flex; padding-top: 8px; }
.sheet { flex: 1; min-width: 0; overflow: hidden; }
.cells { width: 667px; table-layout: fixed; border-collapse: collapse; font: 9px/13px "Noto Sans", sans-serif; color: #111; }
.w-h { width: 32px; } .w-a { width: 84px; } .w-b { width: 100px; } .w-c { width: 66px; } .w-d { width: 56px; } .w-e { width: 67px; } .w-g { width: 49px; }
.cells tr { height: 15px; }
.cells tbody tr:nth-child(3n) { height: 16px; }
.cells th, .cells td { padding: 0; height: 15px; white-space: nowrap; overflow: hidden; }
.cells td { padding-top: 1px; }
.cells th { background: #f5f5f5; font-weight: 400; font-size: 10px; color: #666; }
.cells thead th { border-bottom: 2px solid #bbb; border-right: 1px solid #ddd; }
.cells thead .hot { background: #c8e8d4; border-bottom-color: #107c41; color: #107c41; }
.cells .corner { background: linear-gradient(135deg, transparent 50%, #bbb 50%) right 3px bottom 2px / 9px 9px no-repeat #f5f5f5; }
.cells tbody th { text-align: right; padding-right: 4px; border-right: 2px solid #bbb; border-bottom: 1px solid #ddd; }
.cells td { text-align: center; border: 1px solid #333; }
.cells .l { text-align: left; padding-left: 2px; vertical-align: bottom; }
.cells .r1 td { background: #f00; color: #ff0; font-weight: 700; border-color: #f00; border-bottom-color: #333; }
.mint td, .cells .mintc { background: #cfc; }
.yellow td { background: #ff9; }
.cells .open { border-right-color: #cfc; border-bottom-color: #cfc; border-left-color: #cfc; }
.cells .mintc { border-top-color: #cfc; }
.data td { background: #fff; }
.alt td { background: #e4e4e4; }
.data .l { background: #fff; }
.data .g { background: #92d050; } .data .r { background: #f00; color: #300; padding-top: 0; } .data .o { background: #f4b084; }
.bold .g { font-weight: 600; }
.r span { display: block; margin: 0 -10px; }
.sheet-v { width: 10px; display: flex; flex-direction: column; align-items: center; padding: 17px 0 1px; background: #e8e8e8; }
.sheet-v svg, .sheet-h svg { width: 7px; height: 7px; fill: #888; stroke: none; }
.sheet-v span { width: 5px; height: 58px; margin: 4px 0 auto; border-radius: 3px; background: #858585; }
.sheet-h { height: 10px; flex: none; display: flex; align-items: center; gap: 4px; margin-left: 33px; padding: 0 10px 0 2px; background: #e8e8e8; }
.sheet-h span { width: 217px; height: 6px; border-radius: 3px; background: #858585; }
.sheettabs { height: 24px; flex: none; display: flex; align-items: center; gap: 15px; padding-left: 8px; color: #bbb; }
.sheettabs button { height: 24px; border-bottom: 2px solid #107c41; color: #333; font-weight: 600; font-size: 10px; padding: 0 1px; }
.status { height: 19px; flex: none; display: flex; align-items: center; gap: 9px; padding: 0 9px 0 24px; background: #fff; border-top: 1px solid #e0e0e0; font-size: 9px; color: #555; }
.status span:nth-child(2) { margin-left: 14px; }
.status .fb { margin: 0 18px 0 22px; }

.callout { position: absolute; top: 56px; right: 2px; width: 320px; height: 116px; border: 2px solid #10aeea; display: flex; align-items: flex-start; padding-top: 2px; font-size: 10px; color: #444; }
.submenu { width: 209px; height: 109px; background: #fff; box-shadow: 1px 2px 4px #0003; display: flex; flex-direction: column; }
.submenu button { text-align: left; line-height: 12px; gap: 8px; padding: 2px 7px 0; height: 41px; }
.submenu button.cur { height: 37px; padding-top: 0; background: #e0dedd; border: 1px solid #888; }
.submenu b { display: block; font-weight: 600; color: #111; }
.submenu hr { width: 198px; height: 1px; margin: 3px 0 2px 6px; border: 0; background: #ddd; }
.submenu .open { height: 25px; padding: 0 5px; }
.rootmenu { width: 104px; background: #fff; box-shadow: 0 1px 3px #0003; padding: 2px 0 3px; }
.rootmenu button { width: 100%; height: 25px; gap: 6px; padding: 0 10px 0 7px; }
.rootmenu .cur { background: #f1efee; }
```
